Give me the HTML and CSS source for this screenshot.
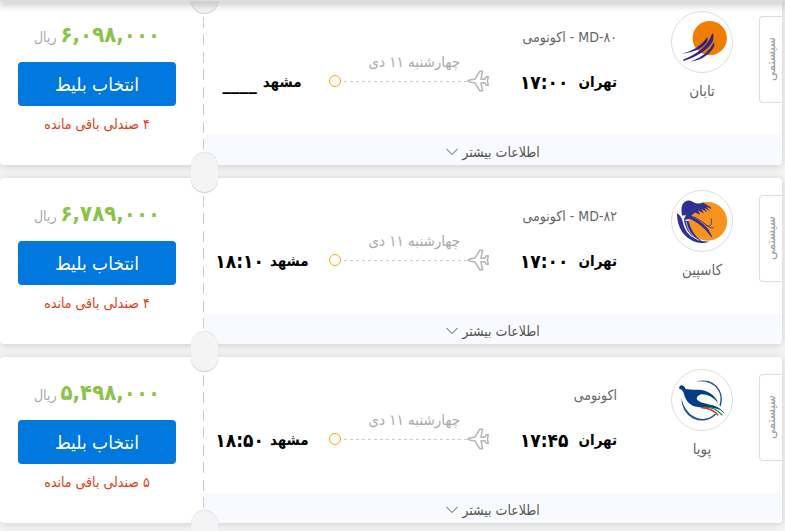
FILE: index.html
```html
<!DOCTYPE html>
<html lang="fa" dir="rtl">
<head>
    <meta charset="UTF-8">
    <meta name="viewport" content="width=device-width, initial-scale=1.0">
    <title>بلیط هواپیما تهران مشهد</title>
    <link rel="stylesheet" href="styles.css">
</head>
<body>
    <!-- Shared icons -->
    <svg class="sprite" aria-hidden="true">
        <symbol id="plane" viewBox="0 0 22 22">
            <path d="M1 11 Q3 9.200 8 9.200 L12.800 1.200 H15.500 L14 9.200 H17.600 L19.400 6.800 H21.300 L20.400 11 L21.300 15.200 H19.400 L17.600 12.800 H14 L15.500 20.800 H12.800 L8 12.800 Q3 12.800 1 11 Z" fill="none" stroke="currentColor" stroke-width="1.500" stroke-linejoin="round"/>
        </symbol>
        <symbol id="chevron" viewBox="0 0 12 8">
            <path d="M0.500 1 L6 6.500 L11.500 1" fill="none" stroke="currentColor"/>
        </symbol>
    </svg>

    <div class="topbar"></div>

    <main class="tickets">
        <article class="ticket">
            <div class="flight">
                <div class="flight-body">
                    <span class="tag">سیستمی</span>
                    <div class="airline">
                        <svg class="logo" viewBox="93 33 186 186" aria-hidden="true">
                            <circle cx="210" cy="114" r="53" fill="#f07d00"/>
                            <g fill="#2e2483">
                                <path d="M123 163 Q176 149 202 111 Q206 116 200 128 Q178 156 123 163 Z"/>
                                <path d="M127 181 Q202 151 218 98 Q224 104 220 122 Q202 160 129 185 Z"/>
                                <path d="M150 187 Q204 168 223 127 Q228 134 218 149 Q194 181 150 187 Z"/>
                            </g>
                        </svg>
                        <span class="airline-name">تابان</span>
                    </div>
                    <div class="route">
                        <p class="class-type">MD-۸۰ - اکونومی</p>
                        <div class="route-line">
                            <div class="origin"><span>تهران</span><time>۱۷:۰۰</time></div>
                            <div class="path">
                                <span class="date">چهارشنبه ۱۱ دی</span>
                                <div class="track"><svg class="plane"><use href="#plane"/></svg><i class="dashes"></i><i class="stop"></i></div>
                            </div>
                            <div class="destination"><span>مشهد</span><time>____</time></div>
                        </div>
                    </div>
                </div>
                <button class="more" type="button">اطلاعات بیشتر<svg class="chevron"><use href="#chevron"/></svg></button>
            </div>
            <div class="purchase">
                <p class="price"><strong>۶,۰۹۸,۰۰۰</strong> ریال</p>
                <button class="btn" type="button">انتخاب بلیط</button>
                <p class="seats">۴ صندلی باقی مانده</p>
            </div>
        </article>

        <article class="ticket">
            <div class="flight">
                <div class="flight-body">
                    <span class="tag">سیستمی</span>
                    <div class="airline">
                        <svg class="logo" viewBox="93 30 186 186" aria-hidden="true">
                            <circle cx="204" cy="124" r="60" fill="#f7941e"/>
                            <g fill="#2e3192">
                                <path d="M124 106 Q118 72 133 63 Q146 56 158 64 Q174 73 189 66 L200 73 L213 80 L215 86 L199 79 L211 92 L193 83 L202 96 L184 86 L192 100 L174 90 L180 104 L164 97 L153 107 Q184 124 205 148 L217 170 L216 174 L197 151 Q174 128 148 116 L130 121 Q131 112 137 105 Z"/>
                                <path d="M108 99 Q119 104 125 121 Q133 165 165 178 Q185 187 208 187 Q188 194 169 189 Q111 171 108 99 Z"/>
                                <path d="M130 121 L145 124 Q153 163 184 184 Q140 173 130 121 Z"/>
                            </g>
                            <path d="M160 109 Q188 124 203 139 Q214 141 215 132 L215 115 M190 127 Q209 148 223 144" fill="none" stroke="#2e3192" stroke-width="2.500"/>
                            <path d="M137 126 Q143 164 177 184" fill="none" stroke="#fff" stroke-width="2"/>
                        </svg>
                        <span class="airline-name">کاسپین</span>
                    </div>
                    <div class="route">
                        <p class="class-type">MD-۸۲ - اکونومی</p>
                        <div class="route-line">
                            <div class="origin"><span>تهران</span><time>۱۷:۰۰</time></div>
                            <div class="path">
                                <span class="date">چهارشنبه ۱۱ دی</span>
                                <div class="track"><svg class="plane"><use href="#plane"/></svg><i class="dashes"></i><i class="stop"></i></div>
                            </div>
                            <div class="destination"><span>مشهد</span><time>۱۸:۱۰</time></div>
                        </div>
                    </div>
                </div>
                <button class="more" type="button">اطلاعات بیشتر<svg class="chevron"><use href="#chevron"/></svg></button>
            </div>
            <div class="purchase">
                <p class="price"><strong>۶,۷۸۹,۰۰۰</strong> ریال</p>
                <button class="btn" type="button">انتخاب بلیط</button>
                <p class="seats">۴ صندلی باقی مانده</p>
            </div>
        </article>

        <article class="ticket">
            <div class="flight">
                <div class="flight-body">
                    <span class="tag">سیستمی</span>
                    <div class="airline">
                        <svg class="logo" viewBox="93 57 186 186" aria-hidden="true">
                            <g fill="#1d4f9c">
                                <path d="M166 93 Q216 80 240 118 Q253 143 244 170 L240 166 Q249 139 234 116 Q211 87 166 93 Z"/>
                                <path d="M122 143 Q122 187 158 207 Q199 225 230 195 L226 193 Q198 219 163 203 Q130 185 122 143 Z"/>
                            </g>
                            <path d="M115 111 Q117 103 126 105 Q133 107 135 116 Q154 119 174 118 Q219 120 237 160 Q214 131 183 132 Q168 137 170 148 Q176 158 208 164 Q230 168 248 183 L235 178 Q215 171 184 173 Q151 171 139 152 Q132 140 128 125 Q124 116 115 114 Z" fill="#003f87"/>
                            <g fill="none" stroke-width="4">
                                <path d="M196 167 Q233 164 254 190" stroke="#003f87" stroke-width="3"/>
                                <path d="M190 172 Q228 170 249 198" stroke="#00963f"/>
                                <path d="M184 174 Q219 175 236 198" stroke="#e32227"/>
                            </g>
                        </svg>
                        <span class="airline-name">پویا</span>
                    </div>
                    <div class="route">
                        <p class="class-type">اکونومی</p>
                        <div class="route-line">
                            <div class="origin"><span>تهران</span><time>۱۷:۴۵</time></div>
                            <div class="path">
                                <span class="date">چهارشنبه ۱۱ دی</span>
                                <div class="track"><svg class="plane"><use href="#plane"/></svg><i class="dashes"></i><i class="stop"></i></div>
                            </div>
                            <div class="destination"><span>مشهد</span><time>۱۸:۵۰</time></div>
                        </div>
                    </div>
                </div>
                <button class="more" type="button">اطلاعات بیشتر<svg class="chevron"><use href="#chevron"/></svg></button>
            </div>
            <div class="purchase">
                <p class="price"><strong>۵,۴۹۸,۰۰۰</strong> ریال</p>
                <button class="btn" type="button">انتخاب بلیط</button>
                <p class="seats">۵ صندلی باقی مانده</p>
            </div>
        </article>
    </main>
</body>
</html>
```

FILE: styles.css
```css
* {
    margin: 0;
    padding: 0;
    box-sizing: border-box;
}

body {
    font-family: 'DejaVu Sans Condensed', 'DejaVu Sans', sans-serif;
    font-size: 14px;
    line-height: 20px;
    color: #666;
    background: #f4f4f4;
}

button {
    font-family: inherit;
    border: none;
    cursor: pointer;
}

.sprite {
    position: absolute;
    width: 0;
    height: 0;
}

.topbar {
    position: fixed;
    top: 0;
    left: 0;
    right: 0;
    height: 1px;
    background: #dcdcdc;
    box-shadow: 0 1px 8px 1px rgba(0,0,0,0.55);
    z-index: 10;
}

.tickets {
    display: flex;
    flex-direction: column;
    gap: 13px;
    margin-top: -1px;
    padding-right: 3px;
    padding-bottom: 8px;
}

.ticket {
    display: flex;
    position: relative;
    background: #fff;
    border-radius: 4px;
    box-shadow: 0 1px 8px rgba(0,0,0,0.16);
}

.flight {
    flex: 1;
    display: flex;
    flex-direction: column;
}

.flight-body {
    flex: 1;
    display: flex;
    align-items: flex-start;
}

/* Vertical label, rotated so it reads from bottom to top */
.tag {
    width: 23px;
    height: 87px;
    margin-top: 17px;
    border: 1px solid #ddd;
    border-left: none;
    border-radius: 0 4px 4px 0;
    color: #999;
    font-size: 13px;
    line-height: 22px;
    text-align: center;
    writing-mode: vertical-rl;
    transform: rotate(180deg);
}

.airline {
    width: 114px;
    padding-top: 12px;
    display: flex;
    flex-direction: column;
    align-items: center;
    gap: 8px;
    font-size: 15px;
}

.logo {
    width: 62px;
    height: 62px;
    border: 1px solid #ddd;
    border-radius: 50%;
}

.route {
    flex: 1;
    padding-top: 28px;
}

.class-type {
    padding-right: 28px;
}

.route-line {
    display: flex;
    align-items: flex-start;
    padding-right: 28px;
}

.origin,
.destination {
    display: flex;
    align-items: center;
    padding-top: 25px;
    color: #000;
    font-size: 15px;
    font-weight: bold;
}

.origin {
    width: 128px;
    gap: 10px;
}

.destination {
    width: 125px;
    justify-content: center;
    gap: 6px;
    padding-right: 9px;
}

time {
    font-size: 19px;
}

.path {
    flex: 1;
    padding-top: 8px;
    color: #aaa;
}

.date {
    display: block;
    padding-right: 29px;
    font-size: 15px;
    line-height: 15px;
}

.track {
    display: flex;
    align-items: center;
}

.plane {
    width: 22px;
    height: 22px;
    color: #b5b5b5;
}

.dashes {
    flex: 1;
    height: 1px;
    background: repeating-linear-gradient(to left, #ccc 0 3px, transparent 3px 6px);
}

.stop {
    width: 12px;
    height: 12px;
    border: 1px solid #ffa500;
    border-radius: 50%;
}

.more {
    height: 30px;
    padding-top: 4px;
    display: flex;
    align-items: center;
    justify-content: center;
    gap: 4px;
    background: #f8faff;
    color: #555;
    font-size: 14px;
    border-radius: 0 0 4px 0;
}

.chevron {
    width: 12px;
    height: 8px;
}

.purchase {
    width: 204px;
    height: 166px;
    padding: 22px 28px 0 18px;
    text-align: center;
    background: repeating-linear-gradient(#ccc 0 11px, transparent 11px 18px, #ccc 18px 29px, transparent 29px 35px) right / 1px 100% no-repeat;
}

/* Tear-off notches between the two halves of the ticket */
.ticket::before,
.ticket::after {
    content: '';
    position: absolute;
    left: 191px;
    width: 27px;
    height: 20px;
    background: #f4f4f4;
    z-index: 1;
}

.ticket::before {
    top: -6px;
    border-radius: 0 0 14px 14px;
    box-shadow: 0 1px 1px rgba(0,0,0,0.2);
}

.ticket::after {
    bottom: -8px;
    border-radius: 14px 14px 0 0;
    box-shadow: 0 -1px 1px rgba(0,0,0,0.1);
}

.price {
    color: #aaa;
    line-height: 28px;
}

.price strong {
    color: #8bc34a;
    font-size: 22px;
}

.btn {
    width: 100%;
    height: 44px;
    margin-top: 11px;
    background: #0078de;
    color: #fff;
    font-size: 19px;
    border-radius: 4px;
}

.seats {
    margin-top: 8px;
    color: #e23c14;
    font-size: 14px;
}
```
